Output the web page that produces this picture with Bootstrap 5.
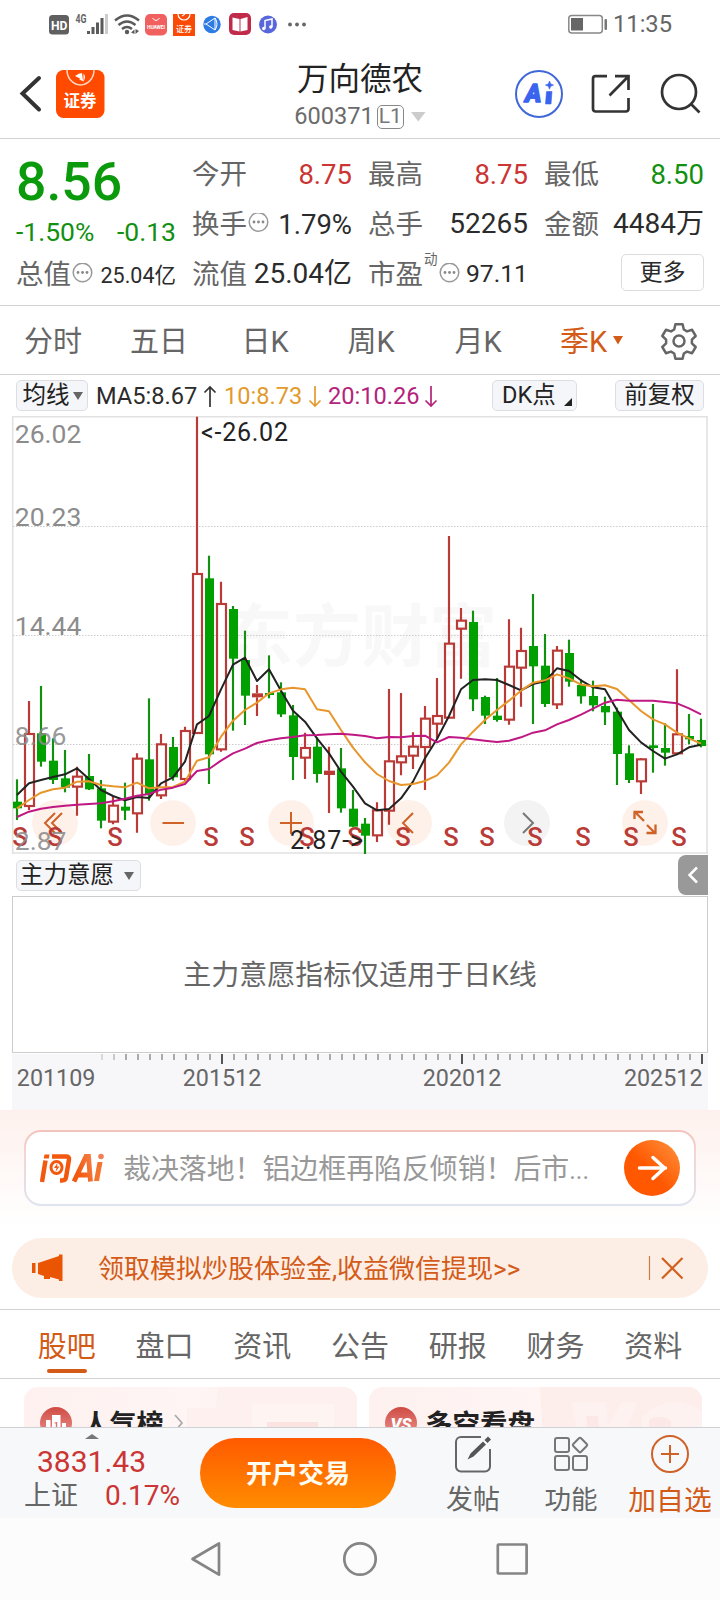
<!DOCTYPE html>
<html lang="zh-CN">
<head>
<meta charset="utf-8">
<meta name="viewport" content="width=device-width, initial-scale=1">
<title>万向德农 600371</title>
<link href="https://cdn.jsdelivr.net/npm/bootstrap@5.3.0/dist/css/bootstrap.min.css" rel="stylesheet">
<style>
:root{--ink:#2b2b2b;--mut:#666;--up:#cb3533;--down:#12900f;--brand:#d35b17;--line:#d3d3d3}
body{width:720px;height:1600px;overflow:hidden;background:#fff;color:var(--ink);font-family:Roboto,"Noto Sans CJK SC",sans-serif;line-height:1;font-size:27px}
svg{display:block;flex:none}
svg text{font-family:Roboto,"Noto Sans CJK SC",sans-serif}
.up{color:var(--up)}.down{color:var(--down)}.mut{color:var(--mut)}.brand{color:var(--brand)}.ink{color:var(--ink)}
.statusbar{height:48px}
.clock{font-size:23.7px;color:#666;width:64px;padding-top:2px}
.topbar{height:91px;border-bottom:1px solid var(--line)}
.stock-name{font-size:31.5px;color:#222;padding-top:7px}
.stock-code{font-size:23.6px;color:#6b6b6b;margin-top:9px}
.lvl{border:1.5px solid #888;border-radius:5px;font-size:21px;width:27px;height:24px;color:#777}
.quote{height:167px;border-bottom:1px solid var(--line);padding:9px 16px 0;display:grid;grid-template-columns:repeat(4,160px);column-gap:16px;grid-template-rows:50px 50px 50px}
.q{display:flex;align-items:center;justify-content:space-between;white-space:nowrap;padding-top:2.5px;font-size:27.5px}
.q.price{font-size:53.5px;font-weight:500;color:#0b9a0b;padding-top:18px}
.q.chg{font-size:26.5px;padding-top:18px}
.more{width:83px;height:37px;border:1.5px solid #dcdcdc;border-radius:5px;font-size:23px;margin-top:-4px}
.periods{height:69px;border-bottom:1px solid var(--line);font-size:29px}
.periods>div{width:106px;padding-top:5px}
.toolrow{height:41px;font-size:23.6px;padding:0 16px;}
.ma{display:flex;align-items:center;padding-top:2px}
.chip{background:#f5f6f9;border:1.5px solid #dddee2;border-radius:5px;height:31px;font-size:23.5px;color:#222;padding-top:1px}
.row-main{height:42px;padding-left:16px;padding-right:12px}
.fold{width:30px;height:40px;background:#999;border-radius:8px 0 0 8px}
.panel-main{margin:0 12px;height:157px;border:1px solid #ccc;font-size:28px;padding-top:2px}
.axis{height:57px}
.ask{height:128px;background:linear-gradient(#fef1ed,#fff 92%);padding:20px 24px 0}
.askbox{height:76px;border:2px solid transparent;border-radius:17px;background:linear-gradient(#fff,#fff) padding-box,linear-gradient(#f3c3bc,#f3d5d3 30%,#dfe4f1) border-box;padding:0 14px;font-size:27.9px;color:#999}
.promo{margin:0 12px;height:60px;border-radius:30px;background:#fceee5;font-size:26px}
.tabs-b{height:70px;border-top:1px solid var(--line);border-bottom:1px solid var(--line);margin-top:11px;padding:0 18px;font-size:29px}
.tabs-b>div{height:68px;position:relative;padding-top:6px}
.tabs-b .on::after{content:"";position:absolute;bottom:5px;width:40px;height:4px;border-radius:2px;background:var(--brand)}
.feed{height:48px;overflow:hidden;padding:8px 18px 0 24px}
.tile{width:333px;height:90px}
.botbar{height:91px;background:#f7f8fa;border-top:1px solid #cfd1d4}
.idx{width:200px}
.act{padding-top:5px}
.act span{padding-top:12px;white-space:nowrap}
.open-btn{width:196px;height:70px;border-radius:35px;background:linear-gradient(#ff5a00,#ff8c00);color:#fffdf2;font-weight:700;font-size:26px;margin-top:10px;padding-top:2px}
.sysnav{height:82px;background:#fcfcfc}
</style>
</head>
<body>
<header>
  <div class="statusbar d-flex align-items-center">
    <svg width="568" height="48" viewBox="0 0 568 48">
      <rect x="49" y="15" width="20" height="19.500" rx="3.500" fill="#606060"/>
      <text x="51" y="30" font-size="13.500" font-weight="700" fill="#fff" textLength="16.500" lengthAdjust="spacingAndGlyphs">HD</text>
      <text x="75.500" y="22.500" font-size="12" font-weight="700" fill="#666" textLength="11" lengthAdjust="spacingAndGlyphs">4G</text>
      <g fill="#5a5a5a"><rect x="87" y="31" width="3" height="3"/><rect x="91.500" y="27" width="3" height="7"/><rect x="96" y="22.500" width="3" height="11.500"/><rect x="100.500" y="18" width="3" height="16"/><rect x="105" y="14" width="3" height="20" fill="#ccc"/></g>
      <g fill="none" stroke="#5a5a5a" stroke-width="2.400"><path d="M115 20.500q12-10 24 0M118.500 25q8.500-7 17 0M122 29q5-4 10 0"/></g>
      <circle cx="127" cy="32" r="2.200" fill="#5a5a5a"/><path d="M131 32.500l3.500-3v4.500M139 31l-3.500-2v5z" fill="#5a5a5a"/>
      <rect x="145" y="14" width="22" height="21.500" rx="5" fill="#f0605f"/><path d="M152.500 18q3.500 5 7 0" fill="none" stroke="#fff" stroke-width="1"/><text x="147" y="28.500" font-size="5" font-weight="700" fill="#fff" textLength="18">HUAWEI</text>
      <rect x="173" y="14" width="22" height="22" fill="#fa4a05"/><path d="M178 14a6 6 0 0 0 12 0M182 16l3-2" fill="none" stroke="#fff" stroke-width="1.200"/><text x="176" y="31.500" font-size="8" font-weight="500" fill="#fff">证券</text>
      <circle cx="212" cy="24.500" r="8.700" fill="#2e7be6"/><path d="M206 24l9-6v12zM206 24l-2 0M215 18q4 6 0 12" fill="none" stroke="#fff" stroke-width="1"/>
      <rect x="229" y="13" width="22" height="22" rx="5" fill="#c22a4a"/><path d="M232.500 17.500l7 1.500v12.500l-7-1.500zM240.500 19l7-2v13l-7 1.500z" fill="#fff"/>
      <circle cx="268" cy="24.500" r="9" fill="#5868dc"/><path d="M265 28.500v-8l7-1.500v8" fill="none" stroke="#fff" stroke-width="1.500"/><circle cx="263.800" cy="28.500" r="1.700" fill="#fff"/><circle cx="270.800" cy="27" r="1.700" fill="#fff"/>
      <g fill="#666"><circle cx="290" cy="24.500" r="1.900"/><circle cx="297" cy="24.500" r="1.900"/><circle cx="304" cy="24.500" r="1.900"/></g>
    </svg>
    <svg width="45" height="48" viewBox="0 0 45 48"><rect x=".8" y="15.500" width="33.500" height="17.500" rx="3" fill="none" stroke="#888" stroke-width="1.500"/><rect x="3" y="18" width="12" height="12.500" fill="#666"/><rect x="36.500" y="19" width="2.500" height="11" rx="1" fill="#777"/></svg>
    <span class="clock">11:35</span>
  </div>
  <div class="topbar d-flex align-items-center">
    <svg width="240" height="90" viewBox="0 48 240 90">
      <path d="M39 78L22.500 93.500L39 109.500" fill="none" stroke="#333" stroke-width="4" stroke-linecap="round"/>
      <rect x="56" y="70" width="48.500" height="48" rx="7.500" fill="#ff4a00"/>
      <path d="M67 70a13.500 15 0 0 0 27 0" fill="none" stroke="#ffd9c8" stroke-width="1.500"/>
      <path d="M75 76q4-3 7-3l1 8q-3-3-8-5zM79 79.500q3-1.500 5 2M83.500 73.500q3 3 0 8" fill="#fff"/>
      <text x="63.500" y="107" font-size="16.500" font-weight="700" fill="#fff">证券</text>
    </svg>
    <div class="d-flex flex-column align-items-center" style="width:240px">
      <div class="stock-name">万向德农</div>
      <div class="stock-code d-flex align-items-center"><span style="margin-right:3px">600371</span><span class="lvl d-flex align-items-center justify-content-center">L1</span><svg style="margin-left:7px" width="15" height="10"><path d="M0 0h14.500l-7.200 9.500z" fill="#ccc"/></svg></div>
    </div>
    <svg width="240" height="90" viewBox="480 48 240 90">
      <circle cx="539" cy="94" r="23" fill="none" stroke="#4067d8" stroke-width="2"/>
      <text x="525" y="102" font-size="25.500" font-weight="900" font-style="italic" fill="#3a64ee" stroke="#3a64ee" stroke-width="1.300" stroke-linejoin="round" textLength="16.500" lengthAdjust="spacingAndGlyphs">A</text>
      <path d="M546.500 91.500h5.500l-1 12.500h-5.500zM549.500 81l1.200 2.900 2.900 1.200-2.900 1.200-1.200 2.900-1.200-2.900-2.900-1.200 2.900-1.200z" fill="#3a64ee" stroke="#3a64ee" stroke-width=".6"/>
      <g fill="none" stroke="#333" stroke-width="2.700"><path d="M607 76.200H595.500a2.500 2.500 0 0 0-2.500 2.500V109a2.500 2.500 0 0 0 2.500 2.500H626a2.500 2.500 0 0 0 2.500-2.500V98M615 76.200H628.500V90M628 76.800L609.500 95.500"/><circle cx="679" cy="92" r="17"/><path d="M691.500 104.500l8 8"/></g>
    </svg>
  </div>
</header>

<section class="quote">
  <div class="q price"><span>8.56</span></div>
  <div class="q mut"><span>今开</span><span class="up">8.75</span></div>
  <div class="q mut"><span>最高</span><span class="up">8.75</span></div>
  <div class="q mut"><span>最低</span><span class="down">8.50</span></div>
  <div class="q down chg"><span>-1.50%</span><span>-0.13</span></div>
  <div class="q mut"><span class="d-flex align-items-center">换手<svg width="22" height="22" viewBox="0 0 22 22"><circle cx="11.500" cy="9" r="9.300" fill="none" stroke="#999" stroke-width="1.500"/><g fill="#888"><circle cx="7" cy="9" r="1.400"/><circle cx="11.500" cy="9" r="1.400"/><circle cx="16" cy="9" r="1.400"/></g></svg></span><span class="ink">1.79%</span></div>
  <div class="q mut"><span>总手</span><span class="ink" style="font-size:28px">52265</span></div>
  <div class="q mut"><span>金额</span><span class="ink" style="font-size:28px">4484万</span></div>
  <div class="q mut"><span class="d-flex align-items-center">总值<svg width="22" height="22" viewBox="0 0 22 22"><circle cx="11.500" cy="9.500" r="9.300" fill="none" stroke="#999" stroke-width="1.500"/><g fill="#888"><circle cx="7" cy="9.500" r="1.400"/><circle cx="11.500" cy="9.500" r="1.400"/><circle cx="16" cy="9.500" r="1.400"/></g></svg></span><span class="ink" style="font-size:21.500px;padding-top:2px">25.04亿</span></div>
  <div class="q mut"><span>流值</span><span class="ink" style="font-size:28px">25.04亿</span></div>
  <div class="q mut"><span class="d-flex align-items-center">市盈<span class="align-self-start" style="font-size:13.500px;margin:-8px 0 0 1px">动</span><svg width="22" height="22" viewBox="0 0 22 22"><circle cx="11.500" cy="9.500" r="9.300" fill="none" stroke="#999" stroke-width="1.500"/><g fill="#888"><circle cx="7" cy="9.500" r="1.400"/><circle cx="11.500" cy="9.500" r="1.400"/><circle cx="16" cy="9.500" r="1.400"/></g></svg></span><span class="ink" style="font-size:24.700px">97.11</span></div>
  <div class="q justify-content-end"><span class="more d-flex align-items-center justify-content-center">更多</span></div>
</section>

<nav class="periods d-flex align-items-center text-center mut">
  <div>分时</div><div>五日</div><div>日K</div><div>周K</div><div style="padding-left:2px">月K</div>
  <div class="brand d-flex align-items-center justify-content-center" style="padding-left:18px">季K<svg style="margin-left:5px;margin-top:-3px" width="12" height="10"><path d="M1 0h10l-5 8.500z" fill="#d35b17"/></svg></div>
  <svg width="84" height="44" viewBox="636 318 84 44"><g fill="none" stroke="#666" stroke-width="2.500" stroke-linejoin="round"><path d="M675.400 324.300h7.200l1.200 5.200 3.200 1.900 5.100-1.600 3.600 6.200-3.800 3.600v3.800l3.800 3.600-3.600 6.200-5.100-1.600-3.200 1.900-1.200 5.200h-7.200l-1.200-5.200-3.200-1.900-5.100 1.600-3.600-6.200 3.800-3.600v-3.800l-3.800-3.600 3.600-6.200 5.100 1.600 3.200-1.900z"/><circle cx="679" cy="341" r="5.500"/></g></svg>
</nav>

<main>
  <div class="toolrow d-flex align-items-center">
    <span class="chip d-flex align-items-center justify-content-center" style="width:72px;padding-left:1px">均线<svg style="margin-left:3px" width="10" height="9"><path d="M0 0h10l-5 8z" fill="#666"/></svg></span>
    <span class="ma" style="margin-left:8px;width:128px">MA5:8.67<svg style="margin-left:5px" width="16" height="24"><path d="M8 22V2M2.500 7.500L8 2l5.500 5.500" fill="none" stroke="#333" stroke-width="1.700"/></svg></span>
    <span class="ma" style="width:104px;color:#e39a2d">10:8.73<svg style="margin-left:5px" width="16" height="24"><path d="M8 1v20M2.500 15.500L8 21l5.500-5.500" fill="none" stroke="#e39a2d" stroke-width="1.700"/></svg></span>
    <span class="ma" style="width:164px;color:#b4237b">20:10.26<svg style="margin-left:3px" width="16" height="24"><path d="M8 1v20M2.500 15.500L8 21l5.500-5.500" fill="none" stroke="#b4237b" stroke-width="1.700"/></svg></span>
    <span class="chip d-flex align-items-center" style="width:85px;padding-left:9px">DK点<svg class="align-self-end" style="margin:0 0 4px 8px" width="8" height="8"><path d="M8 0v8H0z" fill="#222"/></svg></span>
    <span class="chip d-flex align-items-center justify-content-center ms-auto" style="width:89px">前复权</span>
  </div>
  <svg width="720" height="438" viewBox="0 416 720 438">
    <g font-size="68" font-weight="700" fill="#f8f8f8"><text x="225" y="661">东方财富</text></g>
    <path d="M12.700 416v438M707 416v438M12 416.800H708M12 853H708" stroke="#e2e2e2" stroke-width="1.600" fill="none"/>
    <path d="M13 526.500H708M13 635.500H708M13 744.500H708" stroke="#ccc" stroke-width="1" stroke-dasharray="1.500 1.500"/>
    <g font-size="26.500" fill="#8c8c8c"><text x="14.800" y="443">26.02</text><text x="14.800" y="525.600">20.23</text><text x="14.800" y="634.600">14.44</text></g>
    <g id="pads">
      <circle cx="55" cy="823" r="23" fill="#fef1ea"/><circle cx="173" cy="823" r="23" fill="#fef1ea"/><circle cx="291" cy="823" r="23" fill="#fef1ea"/><circle cx="409" cy="823" r="23" fill="#fef1ea"/><circle cx="527" cy="823" r="23" fill="#f3f3f3"/><circle cx="645" cy="823" r="23" fill="#fef1ea"/>
    </g>
    <g transform="translate(0 410) scale(.33333)" id="plot"></g>
    <g fill="none" stroke="#cf6227" stroke-width="2"><path d="M55 813l-10 10 10 10M62 813l-10 10 10 10M162.500 823h21.500M280 823h22M291 812v22M413 813l-10 10 10 10"/><path d="M644 821l-8.500-8.500M634.500 819v-7h8.500M647 825l8 8M655.500 824.500v8.500h-9" stroke-width="2.300"/><path d="M523 813l10 10-10 10" stroke="#777"/></g>
    <g id="signals" font-size="25.500" font-weight="500" fill="#b93a36" text-anchor="middle"></g>
    <g font-size="26.500" fill="#8c8c8c" fill-opacity=".9"><text x="14.800" y="744.600">8.66</text><text x="14.800" y="850">2.87</text></g>
    <g font-size="25" fill="#222"><text x="201" y="441" textLength="87">&lt;-26.02</text><text x="290" y="848.600" textLength="73">2.87-&gt;</text></g>
  </svg>
  <div class="row-main d-flex align-items-center justify-content-between">
    <span class="chip d-flex align-items-center" style="width:125px;padding-left:3px;margin-top:1px">主力意愿<svg style="margin-left:10px" width="10" height="9"><path d="M0 0h10l-5 8z" fill="#666"/></svg></span>
    <span class="fold d-flex align-items-center justify-content-center"><svg width="12" height="18"><path d="M10 1.500L2.500 9l7.500 7.500" fill="none" stroke="#fff" stroke-width="2.500"/></svg></span>
  </div>
  <div class="panel-main d-flex align-items-center justify-content-center mut">主力意愿指标仅适用于日K线</div>
  <svg class="axis" width="720" height="57" viewBox="0 1053 720 57">
    <rect x="12" y="1054" width="696" height="56" fill="#f7f7fa"/>
    <g id="ticks"></g>
    <g font-size="23.300" fill="#666"><text x="16.800" y="1086.300">201109</text><text x="222" y="1086.300" text-anchor="middle">201512</text><text x="462" y="1086.300" text-anchor="middle">202012</text><text x="702.500" y="1086.300" text-anchor="end">202512</text></g>
  </svg>

  <section class="ask">
    <div class="askbox d-flex align-items-center">
      <svg width="84" height="40" viewBox="40 1148 84 40">
        <defs><linearGradient id="lg" gradientUnits="userSpaceOnUse" x1="40" x2="106" y1="1180" y2="1158"><stop offset=".55" stop-color="#f2590f"/><stop offset="1" stop-color="#f79868"/></linearGradient>
        <linearGradient id="go" x1="0" y1="1" x2="1" y2="0"><stop offset=".45" stop-color="#ff5800"/><stop offset="1" stop-color="#ff9440"/></linearGradient></defs>
        <g fill="none" stroke="url(#lg)"><path d="M45.500 1160.500L42 1182" stroke-width="4.500"/><path d="M52 1156.500h14q3.500 0 3 3l-3 18q-.5 3-4 3h-2" stroke-width="4.500"/><ellipse cx="56.500" cy="1167.500" rx="5.500" ry="6" stroke-width="3"/><path d="M74 1181.500l12-25h2.500l2 25M78 1175h12" stroke-width="4.800"/></g>
        <path d="M44.500 1154.500h5l-.7 4h-5zM57.500 1163l-3.500 5h2.500l-1 4 4-5.500H57z" fill="#f2590f"/>
        <path d="M97.500 1162h5l-3.500 19h-5z" fill="#f4742f"/><circle cx="101" cy="1156.500" r="2.800" fill="#ee8055"/>
      </svg>
      <span class="flex-grow-1 text-nowrap" style="padding-top:4px;margin-left:-1px">裁决落地！铝边框再陷反倾销！后市<span style="font-size:25px">...</span></span>
      <svg width="56" height="56"><circle cx="28" cy="28" r="28" fill="url(#go)"/><path d="M15.500 28h26M29 17.500L40.500 28 29 38.500" fill="none" stroke="#fff" stroke-width="3.500" stroke-linecap="round" stroke-linejoin="round"/></svg>
    </div>
  </section>

  <section class="promo d-flex align-items-center brand">
    <svg width="86" height="60" viewBox="12 1238 86 60"><path d="M32 1263h3.500v10H32zM38 1263l21-7v-1.500h3.500v26.500H59v-1.500l-9-2.500v2h-6v-3l-6-2z" fill="#ea5504"/></svg>
    <span class="text-nowrap" style="padding-top:1px">领取模拟炒股体验金,收益微信提现&gt;&gt;</span>
    <svg class="ms-auto" width="68" height="60" viewBox="640 1238 68 60"><path d="M649.500 1256v24" stroke="#cf7a45" stroke-width="1.200"/><path d="M662 1258l20.500 20.500M682.500 1258L662 1278.500" stroke="#d2601f" stroke-width="2.200" fill="none"/></svg>
  </section>

  <nav class="tabs-b d-flex mut">
    <div class="col d-flex align-items-center justify-content-center brand on">股吧</div>
    <div class="col d-flex align-items-center justify-content-center">盘口</div>
    <div class="col d-flex align-items-center justify-content-center">资讯</div>
    <div class="col d-flex align-items-center justify-content-center">公告</div>
    <div class="col d-flex align-items-center justify-content-center">研报</div>
    <div class="col d-flex align-items-center justify-content-center">财务</div>
    <div class="col d-flex align-items-center justify-content-center">资料</div>
  </nav>

  <section class="feed d-flex justify-content-between">
    <svg class="tile" viewBox="0 0 333 90">
      <defs><linearGradient id="pk"><stop stop-color="#fef1ef"/><stop offset=".5" stop-color="#fef5f4"/><stop offset="1" stop-color="#feefed"/></linearGradient><linearGradient id="rd" x2="0" y2="1"><stop stop-color="#cf4a44"/><stop offset="1" stop-color="#ee9a94"/></linearGradient></defs>
      <rect width="333" height="100" rx="14" fill="url(#pk)"/><path d="M194 0h125a14 14 0 0 1 14 14v76H163V21h29z" fill="#fdf0ee"/><path d="M228 17h82v73h-82z" fill="#fef4f2"/><path d="M243 35h51v12h-51z" fill="#fbe3e1"/>
      <circle cx="32" cy="36" r="16" fill="url(#rd)"/><path d="M22 33h4.500v14H22zM28 28h8.500v19H28zM38 36h4v11h-4z" fill="#fff"/><text x="30" y="40" font-size="8" font-weight="700" fill="#d9605a">1</text>
      <text x="58.500" y="46.500" font-size="27" font-weight="700" fill="#222">人气榜</text><path d="M151 28l7 8-7 8" fill="none" stroke="#aaa" stroke-width="1.700"/>
    </svg>
    <svg class="tile" viewBox="0 0 333 90">
      <rect width="333" height="100" rx="14" fill="url(#pk)"/><path d="M171 0h148a14 14 0 0 1 14 14v76H176z" fill="#fdeeec"/><path d="M202 15h35l2 25 13-25h16l-22 60h-30zM333 24q-30-20-60 5v40h60z" fill="#fef2f0"/><path d="M217 29h12l3 40h-10zM280 33q10-7 22 1v15h-22z" fill="#fce8e6"/>
      <circle cx="32" cy="36" r="16" fill="url(#rd)"/><text x="21.500" y="42.500" font-size="17" font-weight="900" font-style="italic" fill="#fff" textLength="21">VS</text>
      <text x="56" y="46.500" font-size="27.500" font-weight="700" fill="#222">多空看盘</text>
    </svg>
  </section>
</main>

<footer>
  <div class="botbar d-flex">
    <div class="idx">
      <svg width="200" height="19"><path d="M85 11l7-5 7 5z" fill="#77777b"/></svg>
      <div class="up" style="font-size:30px;padding-left:37px">3831.43</div>
      <div class="d-flex align-items-center" style="padding:5px 0 0 24px"><span class="mut" style="width:81px">上证</span><span class="up" style="font-size:28px">0.17%</span></div>
    </div>
    <div class="open-btn d-flex align-items-center justify-content-center">开户交易</div>
    <div class="act d-flex flex-column align-items-center mut" style="width:154px">
      <svg width="40" height="42" viewBox="453 1433 40 42"><path d="M481 1437h-20a5 5 0 0 0-5 5v24.500a5 5 0 0 0 5 5h24a5 5 0 0 0 5-5V1449" fill="none" stroke="#666" stroke-width="2"/><path d="M467.500 1459.500l3-6 12.500-12 3 3-12.500 12zM484.500 1440l3.500-3.500 3 3-3.500 3.500z" fill="#555"/></svg>
      <span>发帖</span>
    </div>
    <div class="act d-flex flex-column align-items-center mut" style="width:42px">
      <svg width="40" height="42" viewBox="551 1433 40 42"><g fill="none" stroke="#777" stroke-width="2"><rect x="555" y="1438" width="14" height="14" rx="2"/><rect x="555" y="1456" width="14" height="14" rx="2"/><rect x="573" y="1456" width="14" height="14" rx="2"/><rect x="574.500" y="1439.500" width="11" height="11" rx="1.500" transform="rotate(45 580 1445)"/></g></svg>
      <span style="font-size:26.500px">功能</span>
    </div>
    <div class="act d-flex flex-column align-items-center brand ms-auto" style="width:100px">
      <svg width="40" height="42" viewBox="650 1433 40 42"><g fill="none" stroke="#cf6227" stroke-width="2"><circle cx="670" cy="1454" r="18"/><path d="M661 1454h18M670 1445v18"/></g></svg>
      <span style="font-size:27.800px">加自选</span>
    </div>
  </div>
  <div class="sysnav d-flex justify-content-center">
    <svg width="720" height="82" viewBox="0 1518 720 82"><g fill="none" stroke="#858585" stroke-width="2.700" stroke-linejoin="round"><path d="M192.500 1559L219 1543.500v31.200z"/><circle cx="360" cy="1559" r="15.700"/><rect x="497.800" y="1544.500" width="28.800" height="29" rx=".8"/></g></svg>
  </div>
</footer>

<script src="https://cdn.jsdelivr.net/npm/bootstrap@5.3.0/dist/js/bootstrap.bundle.min.js"></script>
<script>
// direction, high, body top, body bottom, low — in thirds of a pixel from the plot origin
const candles = `g1108,1175,1195,1230 r873,972,1188,1200 g828,970,1055,1070 g985,1052,1110,1122 g1020,1105,1133,1147 r1070,1100,1130,1217 g1032,1098,1138,1140 g1110,1135,1232,1255 r1158,1187,1235,1243 g1118,1190,1202,1230
r1030,1046,1210,1268 g865,1048,1152,1172 r972,1003,1156,1167 g981,1011,1102,1112 r950,963,1107,1113 r20,492,969,972 g437,505,1033,1122 r515,582,1018,1025 g588,597,746,962 g662,750,857,945
r825,850,862,918 g736,849,855,865 g817,847,913,921 g885,916,1041,1110 r968,1014,1043,1107 g982,1010,1092,1118 r1010,1082,1095,1209 g1014,1075,1195,1208 g1140,1196,1250,1252 g1224,1241,1277,1332
r1177,1201,1276,1296 r837,1054,1202,1244 r849,1039,1057,1096 r967,1010,1037,1077 r888,926,1011,1140 r804,918,941,985 r378,701,923,925 r594,632,656,806 g602,636,868,903 g857,861,917,942
g804,917,930,935 r628,770,929,944 r653,723,773,890 g552,708,769,942 g672,767,882,891 r708,722,883,897 g689,729,815,830 g808,825,859,881 g812,858,886,904 g860,888,907,945
g893,905,1032,1125 g1006,1030,1110,1119 r1045,1048,1114,1152 g882,1006,1014,1088 g940,1014,1028,1067 r778,973,1030,1032 g912,978,988,1003 g926,990,1008,1012`.split(/\s+/);
const lines = {
  '#222': [1155,1120,1110,1101,1093,1075,1107,1140,1158,1171,1161,1164,1120,1102,1055,943,918,838,764,743,813,778,842,902,935,985,1030,1085,1130,1180,1201,1197,1165,1115,1045,987,918,838,810,808,810,825,841,822,814,775,783,811,832,838,900,960,997,1023,1046,1033,1012,1004],
  '#e8962b': [1195,1170,1148,1138,1133,1115,1114,1125,1129,1132,1118,1135,1132,1131,1115,1052,1042,980,932,900,878,850,838,833,838,898,904,960,1013,1057,1092,1113,1125,1122,1113,1096,1058,1003,965,930,900,872,842,818,811,793,805,824,829,826,837,870,903,928,943,968,985,1001],
  '#c01883': [1221,1205,1196,1191,1187,1184,1182,1180,1174,1166,1157,1152,1139,1133,1122,1083,1077,1052,1030,1016,999,991,985,981,976,975,973,971,974,978,985,981,982,978,977,997,981,983,988,992,996,992,982,968,961,943,930,914,896,878,869,872,872,872,876,880,895,913]
};
let out = '';
candles.forEach((c, i) => {
  const red = c[0] === 'r', x = 51 + 36 * i;
  const [h, t, b, l] = c.slice(1).split(',').map(Number);
  if (red) {
    out += `<path d="M${x} ${h}V${t}M${x} ${b}V${l}" stroke="#b93a36" stroke-width="6.500"/>`;
    out += b - t < 15
      ? `<rect x="${x - 15}" y="${t}" width="33" height="${b - t}" fill="#b93a36"/>`
      : `<rect x="${x - 12}" y="${t}" width="27" height="${b - t}" fill="none" stroke="#b93a36" stroke-width="6.500"/>`;
  } else {
    out += `<path d="M${x} ${h}V${l}" stroke="#12900f" stroke-width="6.500"/><rect x="${x - 12}" y="${t}" width="27" height="${b - t}" fill="#00a000"/>`;
  }
});
for (const [color, ys] of Object.entries(lines)) {
  out += `<polyline points="${ys.map((y, i) => (51 + 36 * i) + ',' + y).join(' ')}" fill="none" stroke="${color}" stroke-width="6" stroke-linejoin="round"/>`;
}
document.getElementById('plot').innerHTML = out;
document.getElementById('signals').innerHTML = [20,55,115,211,247,307,355,403,451,487,535,583,631,679].map(x => `<text x="${x}" y="845.500">S</text>`).join('');
let ticks = '';
for (let x = 102; x <= 702; x += 12) {
  const major = (x - 222) % 240 === 0;
  ticks += `<path d="M${x} 1054v${major ? 10 : 6}" stroke="${major ? '#555' : '#aaa'}" stroke-width="2" opacity="${x < 110 ? .4 : x < 120 ? .6 : 1}"/>`;
}
document.getElementById('ticks').innerHTML = ticks;
</script>
</body>
</html>
